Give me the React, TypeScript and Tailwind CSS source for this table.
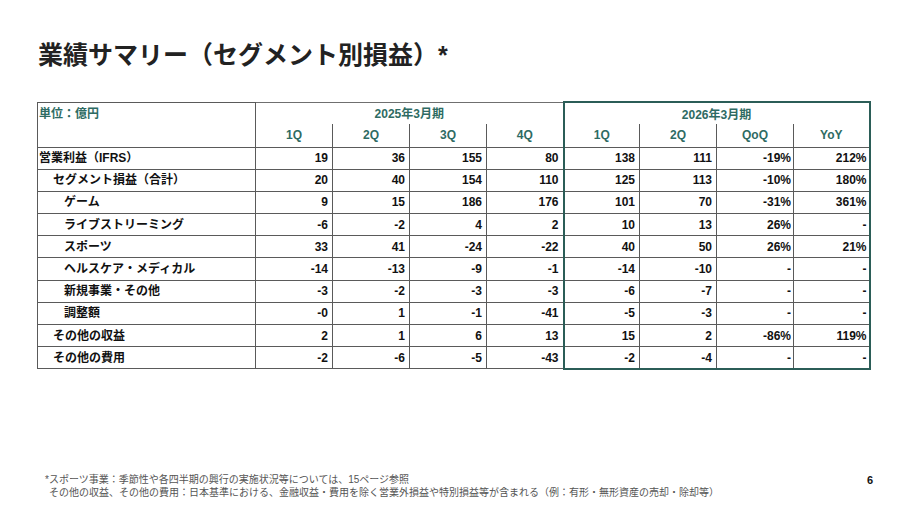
import React from "react";

type Row = { label: string; lvl: 0 | 1 | 2; v: string[] };

const rows: Row[] = [
  { label: "営業利益（IFRS）", lvl: 0, v: ["19", "36", "155", "80", "138", "111", "-19%", "212%"] },
  { label: "セグメント損益（合計）", lvl: 1, v: ["20", "40", "154", "110", "125", "113", "-10%", "180%"] },
  { label: "ゲーム", lvl: 2, v: ["9", "15", "186", "176", "101", "70", "-31%", "361%"] },
  { label: "ライブストリーミング", lvl: 2, v: ["-6", "-2", "4", "2", "10", "13", "26%", "-"] },
  { label: "スポーツ", lvl: 2, v: ["33", "41", "-24", "-22", "40", "50", "26%", "21%"] },
  { label: "ヘルスケア・メディカル", lvl: 2, v: ["-14", "-13", "-9", "-1", "-14", "-10", "-", "-"] },
  { label: "新規事業・その他", lvl: 2, v: ["-3", "-2", "-3", "-3", "-6", "-7", "-", "-"] },
  { label: "調整額", lvl: 2, v: ["-0", "1", "-1", "-41", "-5", "-3", "-", "-"] },
  { label: "その他の収益", lvl: 1, v: ["2", "1", "6", "13", "15", "2", "-86%", "119%"] },
  { label: "その他の費用", lvl: 1, v: ["-2", "-6", "-5", "-43", "-2", "-4", "-", "-"] },
];

const lvlPad = ["pl-[1px]", "pl-[15px]", "pl-[26px]"];

const cellBase = "border border-[#5a5a5a] text-right align-middle p-0";

function numCellClass(i: number, last: boolean) {
  const pr = i >= 6 ? "pr-[2px]" : "pr-[4px]";
  let extra = "";
  if (i === 4) extra += " border-l-2 border-l-[#2b5d57]";
  if (i === 7) extra += " border-r-2 border-r-[#2b5d57]";
  if (last && i >= 4) extra += " border-b-2 border-b-[#2b5d57]";
  return `${cellBase} ${pr}${extra}`;
}

export default function App() {
  const qs = ["1Q", "2Q", "3Q", "4Q", "1Q", "2Q", "QoQ", "YoY"];
  return (
    <div className="w-[900px] h-[506px] bg-white flex flex-col overflow-hidden font-['Liberation_Sans','Noto_Sans_CJK_JP',sans-serif] text-[#111]">
      <h1 className="pl-[38px] pt-[39px] text-[25px] leading-[32px] font-bold text-[#222]">
        業績サマリー（セグメント別損益）*
      </h1>

      <table className="ml-[37px] mt-[30px] w-[832px] table-fixed border-collapse text-[12px] font-bold leading-[14px]">
        <colgroup>
          <col className="w-[218px]" />
          <col className="w-[77px]" />
          <col className="w-[77px]" />
          <col className="w-[77px]" />
          <col className="w-[77px]" />
          <col className="w-[76px]" />
          <col className="w-[77px]" />
          <col className="w-[77px]" />
          <col className="w-[76px]" />
        </colgroup>
        <thead>
          <tr className="h-[22px]">
            <th
              rowSpan={2}
              className="border border-[#5a5a5a] text-left align-top pl-[1px] pt-[4px] text-[#2e6b63] font-bold"
            >
              単位：億円
            </th>
            <th
              colSpan={4}
              className="border-t border-t-[#6f6f6f] text-center align-middle text-[#2e6b63] font-bold pt-[2px]"
            >
              2025年3月期
            </th>
            <th
              colSpan={4}
              className="border-t-2 border-x-2 border-[#2b5d57] text-center align-middle text-[#2e6b63] font-bold pt-[2px]"
            >
              2026年3月期
            </th>
          </tr>
          <tr className="h-[23px]">
            {qs.map((q, i) => {
              let cls = "border-x border-b border-[#5a5a5a] text-center align-middle text-[#2e6b63] font-bold";
              if (i === 4) cls += " border-l-2 border-l-[#2b5d57]";
              if (i === 7) cls += " border-r-2 border-r-[#2b5d57]";
              return (
                <th key={i} className={cls}>
                  {q}
                </th>
              );
            })}
          </tr>
        </thead>
        <tbody>
          {rows.map((r, ri) => {
            const last = ri === rows.length - 1;
            return (
              <tr key={ri} className="h-[22.2px]">
                <td className={`border border-[#5a5a5a] text-left align-middle ${lvlPad[r.lvl]}`}>
                  {r.label}
                </td>
                {r.v.map((v, i) => (
                  <td key={i} className={numCellClass(i, last)}>
                    {v}
                  </td>
                ))}
              </tr>
            );
          })}
        </tbody>
      </table>

      <div className="mt-auto pb-[7px] flex justify-between items-start pl-[45px] pr-[27px]">
        <div className="text-[10px] leading-[13px] text-[#555]">
          <div>*スポーツ事業：季節性や各四半期の興行の実施状況等については、15ページ参照</div>
          <div className="pl-[4px]">
            その他の収益、その他の費用：日本基準における、金融収益・費用を除く営業外損益や特別損益等が含まれる（例：有形・無形資産の売却・除却等）
          </div>
        </div>
        <div className="text-[11px] leading-[13px] font-bold text-[#111] pt-[1px]">6</div>
      </div>
    </div>
  );
}
